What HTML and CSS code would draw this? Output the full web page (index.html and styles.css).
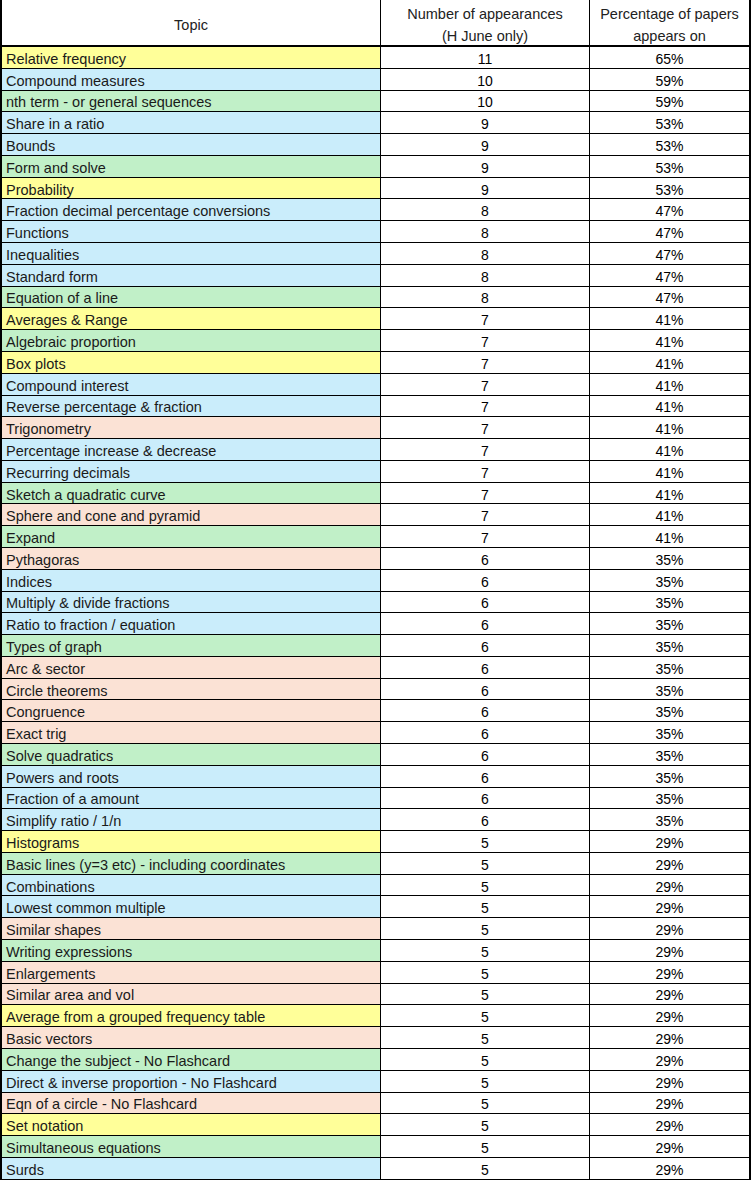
FILE: index.html
```html
<!DOCTYPE html>
<html lang="en">
<head>
<meta charset="utf-8">
<title>Topics</title>
<link rel="stylesheet" href="styles.css">
</head>
<body>
<div class="sheet">
  <div class="cell head">Topic</div>
  <div class="cell head num">Number of appearances<br>(H June only)</div>
  <div class="cell head pct">Percentage of papers<br>appears on</div>

  <div class="cell topic y">Relative frequency</div><div class="cell num">11</div><div class="cell pct">65%</div>
  <div class="cell topic b">Compound measures</div><div class="cell num">10</div><div class="cell pct">59%</div>
  <div class="cell topic g">nth term - or general sequences</div><div class="cell num">10</div><div class="cell pct">59%</div>
  <div class="cell topic b">Share in a ratio</div><div class="cell num">9</div><div class="cell pct">53%</div>
  <div class="cell topic b">Bounds</div><div class="cell num">9</div><div class="cell pct">53%</div>
  <div class="cell topic g">Form and solve</div><div class="cell num">9</div><div class="cell pct">53%</div>
  <div class="cell topic y">Probability</div><div class="cell num">9</div><div class="cell pct">53%</div>
  <div class="cell topic b">Fraction decimal percentage conversions</div><div class="cell num">8</div><div class="cell pct">47%</div>
  <div class="cell topic b">Functions</div><div class="cell num">8</div><div class="cell pct">47%</div>
  <div class="cell topic b">Inequalities</div><div class="cell num">8</div><div class="cell pct">47%</div>
  <div class="cell topic b">Standard form</div><div class="cell num">8</div><div class="cell pct">47%</div>
  <div class="cell topic g">Equation of a line</div><div class="cell num">8</div><div class="cell pct">47%</div>
  <div class="cell topic y">Averages &amp; Range</div><div class="cell num">7</div><div class="cell pct">41%</div>
  <div class="cell topic g">Algebraic proportion</div><div class="cell num">7</div><div class="cell pct">41%</div>
  <div class="cell topic y">Box plots</div><div class="cell num">7</div><div class="cell pct">41%</div>
  <div class="cell topic b">Compound interest</div><div class="cell num">7</div><div class="cell pct">41%</div>
  <div class="cell topic b">Reverse percentage &amp; fraction</div><div class="cell num">7</div><div class="cell pct">41%</div>
  <div class="cell topic p">Trigonometry</div><div class="cell num">7</div><div class="cell pct">41%</div>
  <div class="cell topic b">Percentage increase &amp; decrease</div><div class="cell num">7</div><div class="cell pct">41%</div>
  <div class="cell topic b">Recurring decimals</div><div class="cell num">7</div><div class="cell pct">41%</div>
  <div class="cell topic g">Sketch a quadratic curve</div><div class="cell num">7</div><div class="cell pct">41%</div>
  <div class="cell topic p">Sphere and cone and pyramid</div><div class="cell num">7</div><div class="cell pct">41%</div>
  <div class="cell topic g">Expand</div><div class="cell num">7</div><div class="cell pct">41%</div>
  <div class="cell topic p">Pythagoras</div><div class="cell num">6</div><div class="cell pct">35%</div>
  <div class="cell topic b">Indices</div><div class="cell num">6</div><div class="cell pct">35%</div>
  <div class="cell topic b">Multiply &amp; divide fractions</div><div class="cell num">6</div><div class="cell pct">35%</div>
  <div class="cell topic b">Ratio to fraction / equation</div><div class="cell num">6</div><div class="cell pct">35%</div>
  <div class="cell topic g">Types of graph</div><div class="cell num">6</div><div class="cell pct">35%</div>
  <div class="cell topic p">Arc &amp; sector</div><div class="cell num">6</div><div class="cell pct">35%</div>
  <div class="cell topic p">Circle theorems</div><div class="cell num">6</div><div class="cell pct">35%</div>
  <div class="cell topic p">Congruence</div><div class="cell num">6</div><div class="cell pct">35%</div>
  <div class="cell topic p">Exact trig</div><div class="cell num">6</div><div class="cell pct">35%</div>
  <div class="cell topic g">Solve quadratics</div><div class="cell num">6</div><div class="cell pct">35%</div>
  <div class="cell topic b">Powers and roots</div><div class="cell num">6</div><div class="cell pct">35%</div>
  <div class="cell topic b">Fraction of a amount</div><div class="cell num">6</div><div class="cell pct">35%</div>
  <div class="cell topic b">Simplify ratio / 1/n</div><div class="cell num">6</div><div class="cell pct">35%</div>
  <div class="cell topic y">Histograms</div><div class="cell num">5</div><div class="cell pct">29%</div>
  <div class="cell topic g">Basic lines (y=3 etc) - including coordinates</div><div class="cell num">5</div><div class="cell pct">29%</div>
  <div class="cell topic b">Combinations</div><div class="cell num">5</div><div class="cell pct">29%</div>
  <div class="cell topic b">Lowest common multiple</div><div class="cell num">5</div><div class="cell pct">29%</div>
  <div class="cell topic p">Similar shapes</div><div class="cell num">5</div><div class="cell pct">29%</div>
  <div class="cell topic g">Writing expressions</div><div class="cell num">5</div><div class="cell pct">29%</div>
  <div class="cell topic p">Enlargements</div><div class="cell num">5</div><div class="cell pct">29%</div>
  <div class="cell topic p">Similar area and vol</div><div class="cell num">5</div><div class="cell pct">29%</div>
  <div class="cell topic y">Average from a grouped frequency table</div><div class="cell num">5</div><div class="cell pct">29%</div>
  <div class="cell topic p">Basic vectors</div><div class="cell num">5</div><div class="cell pct">29%</div>
  <div class="cell topic g">Change the subject - No Flashcard</div><div class="cell num">5</div><div class="cell pct">29%</div>
  <div class="cell topic b">Direct &amp; inverse proportion - No Flashcard</div><div class="cell num">5</div><div class="cell pct">29%</div>
  <div class="cell topic p">Eqn of a circle - No Flashcard</div><div class="cell num">5</div><div class="cell pct">29%</div>
  <div class="cell topic y">Set notation</div><div class="cell num">5</div><div class="cell pct">29%</div>
  <div class="cell topic g">Simultaneous equations</div><div class="cell num">5</div><div class="cell pct">29%</div>
  <div class="cell topic b">Surds</div><div class="cell num">5</div><div class="cell pct">29%</div>
</div>
</body>
</html>
```

FILE: styles.css
```css
html, body {
  margin: 0;
  padding: 0;
  background: #ffffff;
}

.sheet {
  display: grid;
  grid-template-columns: 379px 209px 161px;
  grid-template-rows: 47px;
  grid-auto-rows: 21.79px;
  width: 751px;
  border-left: 2px solid #000;
  box-sizing: border-box;
  font-family: "Liberation Sans", Arial, sans-serif;
  font-size: 14px;
  color: #000;
}

.cell {
  box-sizing: border-box;
  border-right: 1px solid #000;
  border-bottom: 1px solid #000;
  display: flex;
  align-items: center;
  padding-top: 3px;
  line-height: 18px;
  white-space: nowrap;
  overflow: hidden;
}

.head {
  justify-content: center;
  text-align: center;
  border-bottom: 2px solid #000;
  padding-top: 4px;
  font-size: 14.5px;
  line-height: 22px;
  color: #222;
}

.topic {
  padding-left: 4px;
  color: #1a1a1a;
  font-size: 14.5px;
}

.num, .pct {
  justify-content: center;
  text-align: center;
}

.pct {
  border-right-width: 2px;
}

.y { background: #ffff99; }
.b { background: #caedfb; }
.g { background: #c1f0c8; }
.p { background: #fbe2d5; }
```
